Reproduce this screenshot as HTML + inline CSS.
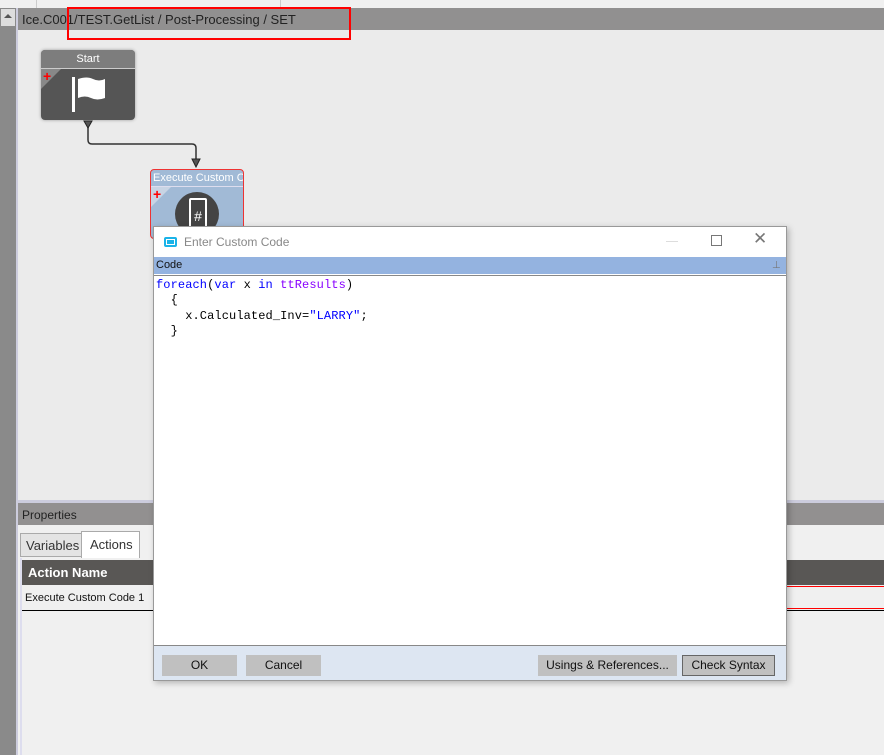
<!DOCTYPE html>
<html><head><style>
*{margin:0;padding:0;box-sizing:border-box}
body{width:884px;height:755px;overflow:hidden;background:#ebebeb;font-family:"Liberation Sans",sans-serif;position:relative}
.a{position:absolute}
.code{font-family:"Liberation Mono",monospace;font-size:12px;line-height:15.3px;white-space:pre;color:#000;letter-spacing:0.1px}
.btn{position:absolute;top:9px;height:21px;background:#c0c0c0;font-size:12px;text-align:center;line-height:21px;color:#111}
</style></head><body>
<div class="a" style="left:0;top:0;width:884px;height:8px;background:#f0f0f0"></div>
<div class="a" style="left:36px;top:0;width:1px;height:8px;background:#ccc"></div>
<div class="a" style="left:280px;top:0;width:1px;height:8px;background:#ccc"></div>
<div class="a" style="left:0;top:8px;width:16px;height:747px;background:#8a8a8a"></div>
<div class="a" style="left:1px;top:9px;width:14px;height:17px;background:#ddd"></div>
<div class="a" style="left:4px;top:14px;width:0;height:0;border-left:4px solid transparent;border-right:4px solid transparent;border-bottom:4px solid #555"></div>
<div class="a" style="left:16px;top:8px;width:2px;height:747px;background:#ccd"></div>
<div class="a" style="left:18px;top:8px;width:866px;height:22px;background:#919090;font-size:13px;color:#222;padding:4px 0 0 4px">Ice.C001/TEST.GetList / Post-Processing / SET</div>
<div class="a" style="left:67px;top:7px;width:284px;height:33px;border:2px solid #f00"></div>
<!-- start node -->
<div class="a" style="left:41px;top:50px;width:94px;height:70px;background:#555;border-radius:4px;box-shadow:0 0 3px #999;overflow:hidden">
<div style="height:19px;background:#7d7d7d;border-bottom:1px solid #ccc;color:#fff;font-size:11px;text-align:center;line-height:19px">Start</div>
<div class="a" style="left:0;top:19px;width:0;height:0;border-top:20px solid #888;border-right:20px solid transparent"></div>
<div class="a" style="left:2px;top:19px;color:#f00;font-weight:bold;font-size:14px;line-height:14px">+</div>
<svg class="a" style="left:28px;top:26px" width="40" height="40"><rect x="3" y="1" width="3" height="35" fill="#fff"/><path d="M9 3 Q18 0 24 3 T36 3 V22 Q28 25 22 22 T9 22Z" fill="#fff"/></svg>
</div>
<svg class="a" style="left:80px;top:118px" width="130" height="52"><path d="M8 4 V22 Q8 26 12 26 H112 Q116 26 116 30 V46" fill="none" stroke="#333" stroke-width="1.5"/><path d="M4 3 L12 3 L8 10Z M112 41 L120 41 L116 49Z" fill="#555" stroke="#222"/></svg>
<!-- execute node -->
<div class="a" style="left:150px;top:169px;width:94px;height:70px;background:#a1bad6;border:1px solid #e33;border-radius:4px;overflow:hidden">
<div style="height:17px;border-bottom:1px solid #dde;color:#fff;font-size:11px;line-height:17px;padding-left:2px;white-space:nowrap">Execute Custom Code</div>
<div class="a" style="left:0;top:17px;width:0;height:0;border-top:20px solid #c8d4e4;border-right:20px solid transparent"></div>
<div class="a" style="left:2px;top:17px;color:#f00;font-weight:bold;font-size:14px;line-height:14px">+</div>
<div class="a" style="left:24px;top:22px;width:44px;height:44px;border-radius:50%;background:#444"></div>
<div class="a" style="left:38px;top:28px;width:18px;height:30px;border:2px solid #fff;border-radius:2px;color:#fff;font-size:14px;text-align:center;padding-top:8px">#</div>
</div>
<!-- properties -->
<div class="a" style="left:18px;top:500px;width:866px;height:3px;background:#ccd"></div>
<div class="a" style="left:18px;top:503px;width:866px;height:22px;background:#929090;font-size:12px;color:#222;padding:5px 0 0 4px">Properties</div>
<div class="a" style="left:18px;top:525px;width:866px;height:230px;background:#f0f0f0"></div>
<div class="a" style="left:20px;top:533px;width:62px;height:24px;background:#e4e4e4;border:1px solid #aaa;font-size:13px;color:#333;padding:4px 0 0 5px">Variables</div>
<div class="a" style="left:81px;top:531px;width:59px;height:27px;background:#fff;border:1px solid #aaa;border-bottom:none;font-size:13px;color:#333;padding:5px 0 0 8px">Actions</div>
<div class="a" style="left:20px;top:558px;width:864px;height:197px;border-left:2px solid #dde;background:#f0f0f0"></div>
<div class="a" style="left:22px;top:560px;width:862px;height:25px;background:#595755;color:#fff;font-weight:bold;font-size:13px;padding:5px 0 0 6px">Action Name</div>
<div class="a" style="left:22px;top:585px;width:862px;height:26px;border-bottom:1px solid #000;font-size:11px;color:#111;padding:7px 0 0 3px">Execute Custom Code 1</div>
<div class="a" style="left:780px;top:586px;width:104px;height:1px;background:#f00"></div>
<div class="a" style="left:780px;top:608px;width:104px;height:1px;background:#f00"></div>
<!-- dialog -->
<div class="a" style="left:153px;top:226px;width:634px;height:455px;background:#fff;border:1px solid #999;box-shadow:2px 2px 6px rgba(0,0,0,.25)">
<div class="a" style="left:10px;top:10px;width:13px;height:10px;border:2px solid #1ab3e8;border-radius:2px;background:#fff"></div>
<div class="a" style="left:13px;top:13px;width:7px;height:4px;background:#1ab3e8"></div>
<div class="a" style="left:30px;top:8px;font-size:12px;color:#888">Enter Custom Code</div>
<div class="a" style="left:512px;top:14px;width:12px;height:1px;background:#ddd"></div>
<div class="a" style="left:557px;top:8px;width:11px;height:11px;border:1px solid #777"></div>
<div class="a" style="left:599px;top:2px;font-size:17px;color:#777">✕</div>
<div class="a" style="left:0;top:30px;width:632px;height:17px;background:#94b3e0;font-size:11px;color:#111;padding:2px 0 0 2px">Code</div>
<div class="a" style="left:618px;top:33px;font-size:10px;color:#777">⊥</div>
<div class="a" style="left:0;top:48px;width:632px;height:1px;background:#888"></div>
<div class="a code" style="left:2px;top:51px"><span style="color:#00f">foreach</span>(<span style="color:#00f">var</span> x <span style="color:#00f">in</span> <span style="color:#80f">ttResults</span>)
  {
    x.Calculated_Inv=<span style="color:#00f">"LARRY"</span>;
  }</div>
<div class="a" style="left:0;top:418px;width:632px;height:35px;background:#dde6f2;border-top:1px solid #888">
<div class="btn" style="left:8px;width:75px">OK</div>
<div class="btn" style="left:92px;width:75px">Cancel</div>
<div class="btn" style="left:384px;width:139px">Usings &amp; References...</div>
<div class="btn" style="left:528px;width:93px;border:1px solid #666;line-height:19px">Check Syntax</div>
</div>
</div>
</body></html>
